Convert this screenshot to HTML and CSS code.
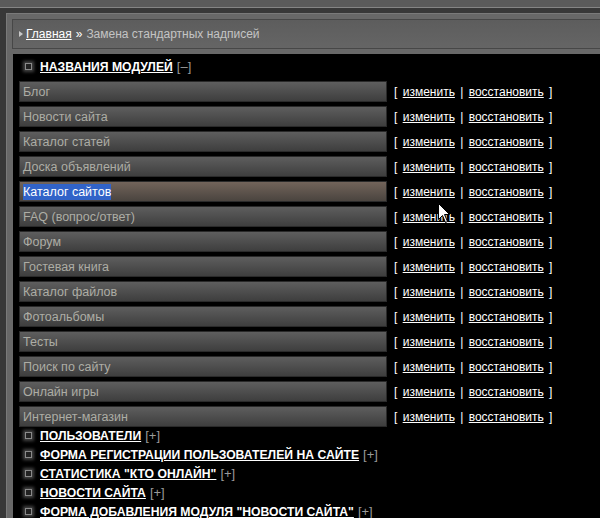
FILE: index.html
```html
<!DOCTYPE html>
<html lang="ru">
<head>
<meta charset="utf-8">
<title>Замена стандартных надписей</title>
<link rel="stylesheet" href="styles.css">
</head>
<body>
<div class="topbar"></div>
<div class="frame">
  <div class="crumbs">
    <span class="tri"></span>
    <a href="#" class="home">Главная</a>
    <span class="sep">»</span>
    <span class="cur">Замена стандартных надписей</span>
  </div>
  <div class="content">
    <div class="sect first"><span class="dot"></span><a href="#" class="stitle">НАЗВАНИЯ МОДУЛЕЙ</a> <span class="tog">[–]</span></div>
    <div class="rows">
      <div class="row"><div class="field">Блог</div><div class="acts">[ <a href="#">изменить</a> | <a href="#">восстановить</a> ]</div></div>
      <div class="row"><div class="field">Новости сайта</div><div class="acts">[ <a href="#">изменить</a> | <a href="#">восстановить</a> ]</div></div>
      <div class="row"><div class="field">Каталог статей</div><div class="acts">[ <a href="#">изменить</a> | <a href="#">восстановить</a> ]</div></div>
      <div class="row"><div class="field">Доска объявлений</div><div class="acts">[ <a href="#">изменить</a> | <a href="#">восстановить</a> ]</div></div>
      <div class="row"><div class="field active"><span class="sel">Каталог сайтов</span></div><div class="acts">[ <a href="#">изменить</a> | <a href="#">восстановить</a> ]</div></div>
      <div class="row"><div class="field">FAQ (вопрос/ответ)</div><div class="acts">[ <a href="#">изменить</a> | <a href="#">восстановить</a> ]</div></div>
      <div class="row"><div class="field">Форум</div><div class="acts">[ <a href="#">изменить</a> | <a href="#">восстановить</a> ]</div></div>
      <div class="row"><div class="field">Гостевая книга</div><div class="acts">[ <a href="#">изменить</a> | <a href="#">восстановить</a> ]</div></div>
      <div class="row"><div class="field">Каталог файлов</div><div class="acts">[ <a href="#">изменить</a> | <a href="#">восстановить</a> ]</div></div>
      <div class="row"><div class="field">Фотоальбомы</div><div class="acts">[ <a href="#">изменить</a> | <a href="#">восстановить</a> ]</div></div>
      <div class="row"><div class="field">Тесты</div><div class="acts">[ <a href="#">изменить</a> | <a href="#">восстановить</a> ]</div></div>
      <div class="row"><div class="field">Поиск по сайту</div><div class="acts">[ <a href="#">изменить</a> | <a href="#">восстановить</a> ]</div></div>
      <div class="row"><div class="field">Онлайн игры</div><div class="acts">[ <a href="#">изменить</a> | <a href="#">восстановить</a> ]</div></div>
      <div class="row"><div class="field">Интернет-магазин</div><div class="acts">[ <a href="#">изменить</a> | <a href="#">восстановить</a> ]</div></div>
    </div>
    <div class="more">
      <div class="sect"><span class="dot"></span><a href="#" class="stitle">ПОЛЬЗОВАТЕЛИ</a> <span class="tog">[+]</span></div>
      <div class="sect"><span class="dot"></span><a href="#" class="stitle">ФОРМА РЕГИСТРАЦИИ ПОЛЬЗОВАТЕЛЕЙ НА САЙТЕ</a> <span class="tog">[+]</span></div>
      <div class="sect"><span class="dot"></span><a href="#" class="stitle">СТАТИСТИКА "КТО ОНЛАЙН"</a> <span class="tog">[+]</span></div>
      <div class="sect"><span class="dot"></span><a href="#" class="stitle">НОВОСТИ САЙТА</a> <span class="tog">[+]</span></div>
      <div class="sect"><span class="dot"></span><a href="#" class="stitle">ФОРМА ДОБАВЛЕНИЯ МОДУЛЯ "НОВОСТИ САЙТА"</a> <span class="tog">[+]</span></div>
    </div>
  </div>
</div>
<svg class="cursor" width="13" height="21" viewBox="0 0 13 21"><path d="M0.5 0.5 L0.5 16.5 L4.5 12.5 L7.5 19.5 L9.5 18.5 L6.5 11.5 L11.5 11.5 Z" fill="#fff" stroke="#000" stroke-width="1"/></svg>
</body>
</html>
```
FILE: styles.css
```css
html, body {
  margin: 0;
  padding: 0;
}
body {
  background: #383838;
  font-family: "Liberation Sans", Arial, sans-serif;
  font-size: 12px;
  height: 518px;
  overflow: hidden;
  position: relative;
}
.topbar {
  height: 7px;
  background: #5b5b5b;
  border-bottom: 1px solid #858585;
}
.frame {
  margin: 5px 0 0 6px;
  background: #686868;
  border-top: 1px solid #7a7a7a;
  border-left: 1px solid #7a7a7a;
  padding: 5px 0 0 5px;
  height: 600px;
}
.crumbs {
  height: 28px;
  border: 1px solid #474747;
  border-right: none;
  background: linear-gradient(#5d5d5d, #656565);
  display: flex;
  align-items: center;
  padding-left: 6px;
  color: #c4c4c4;
  margin-bottom: 5px;
}
.tri {
  width: 0;
  height: 0;
  border-top: 3.5px solid transparent;
  border-bottom: 3.5px solid transparent;
  border-left: 4px solid #c8c8c8;
  margin-right: 3px;
}
.home {
  color: #fff;
}
.sep {
  margin: 0 4px 0 4px;
  color: #fff;
}
.content {
  background: #000;
  margin-left: 1px;
  padding: 3px 0 0 6px;
  height: 600px;
}
.sect {
  display: flex;
  align-items: center;
  height: 19px;
  color: #9a9a9a;
}
.sect.first {
  margin-bottom: 5px;
}
.dot {
  width: 5px;
  height: 5px;
  border: 1px solid #8a8a8a;
  background: #222;
  box-shadow: 0 0 3px 2px #444;
  margin: 0 8px 0 6px;
}
.stitle {
  color: #fff;
  font-weight: bold;
  font-size: 12.2px;
  margin-right: 4px;
}
.tog {
  font-size: 13px;
}
.rows {
  display: flex;
  flex-direction: column;
  gap: 4px;
}
.more {
  margin-top: -1px;
}
.row {
  display: flex;
  align-items: center;
  height: 21px;
}
.field {
  width: 363px;
  height: 18px;
  padding-top: 1px;
  border: 1px solid #2a2a2a;
  background: linear-gradient(#5e5e5e, #3e3e3e);
  color: #adada5;
  padding-left: 3px;
  line-height: 19px;
  font-size: 12.5px;
}
.field.active {
  background: linear-gradient(#72645a, #4a443f);
}
.sel {
  background: #3163c8;
  color: #fff;
  padding: 1px 0;
}
.acts {
  color: #fff;
  margin-left: 7px;
  font-size: 12px;
  white-space: nowrap;
  word-spacing: 2px;
}
.acts a {
  color: #fff;
  word-spacing: 0;
}
.cursor {
  position: absolute;
  left: 438px;
  top: 203px;
}
```
